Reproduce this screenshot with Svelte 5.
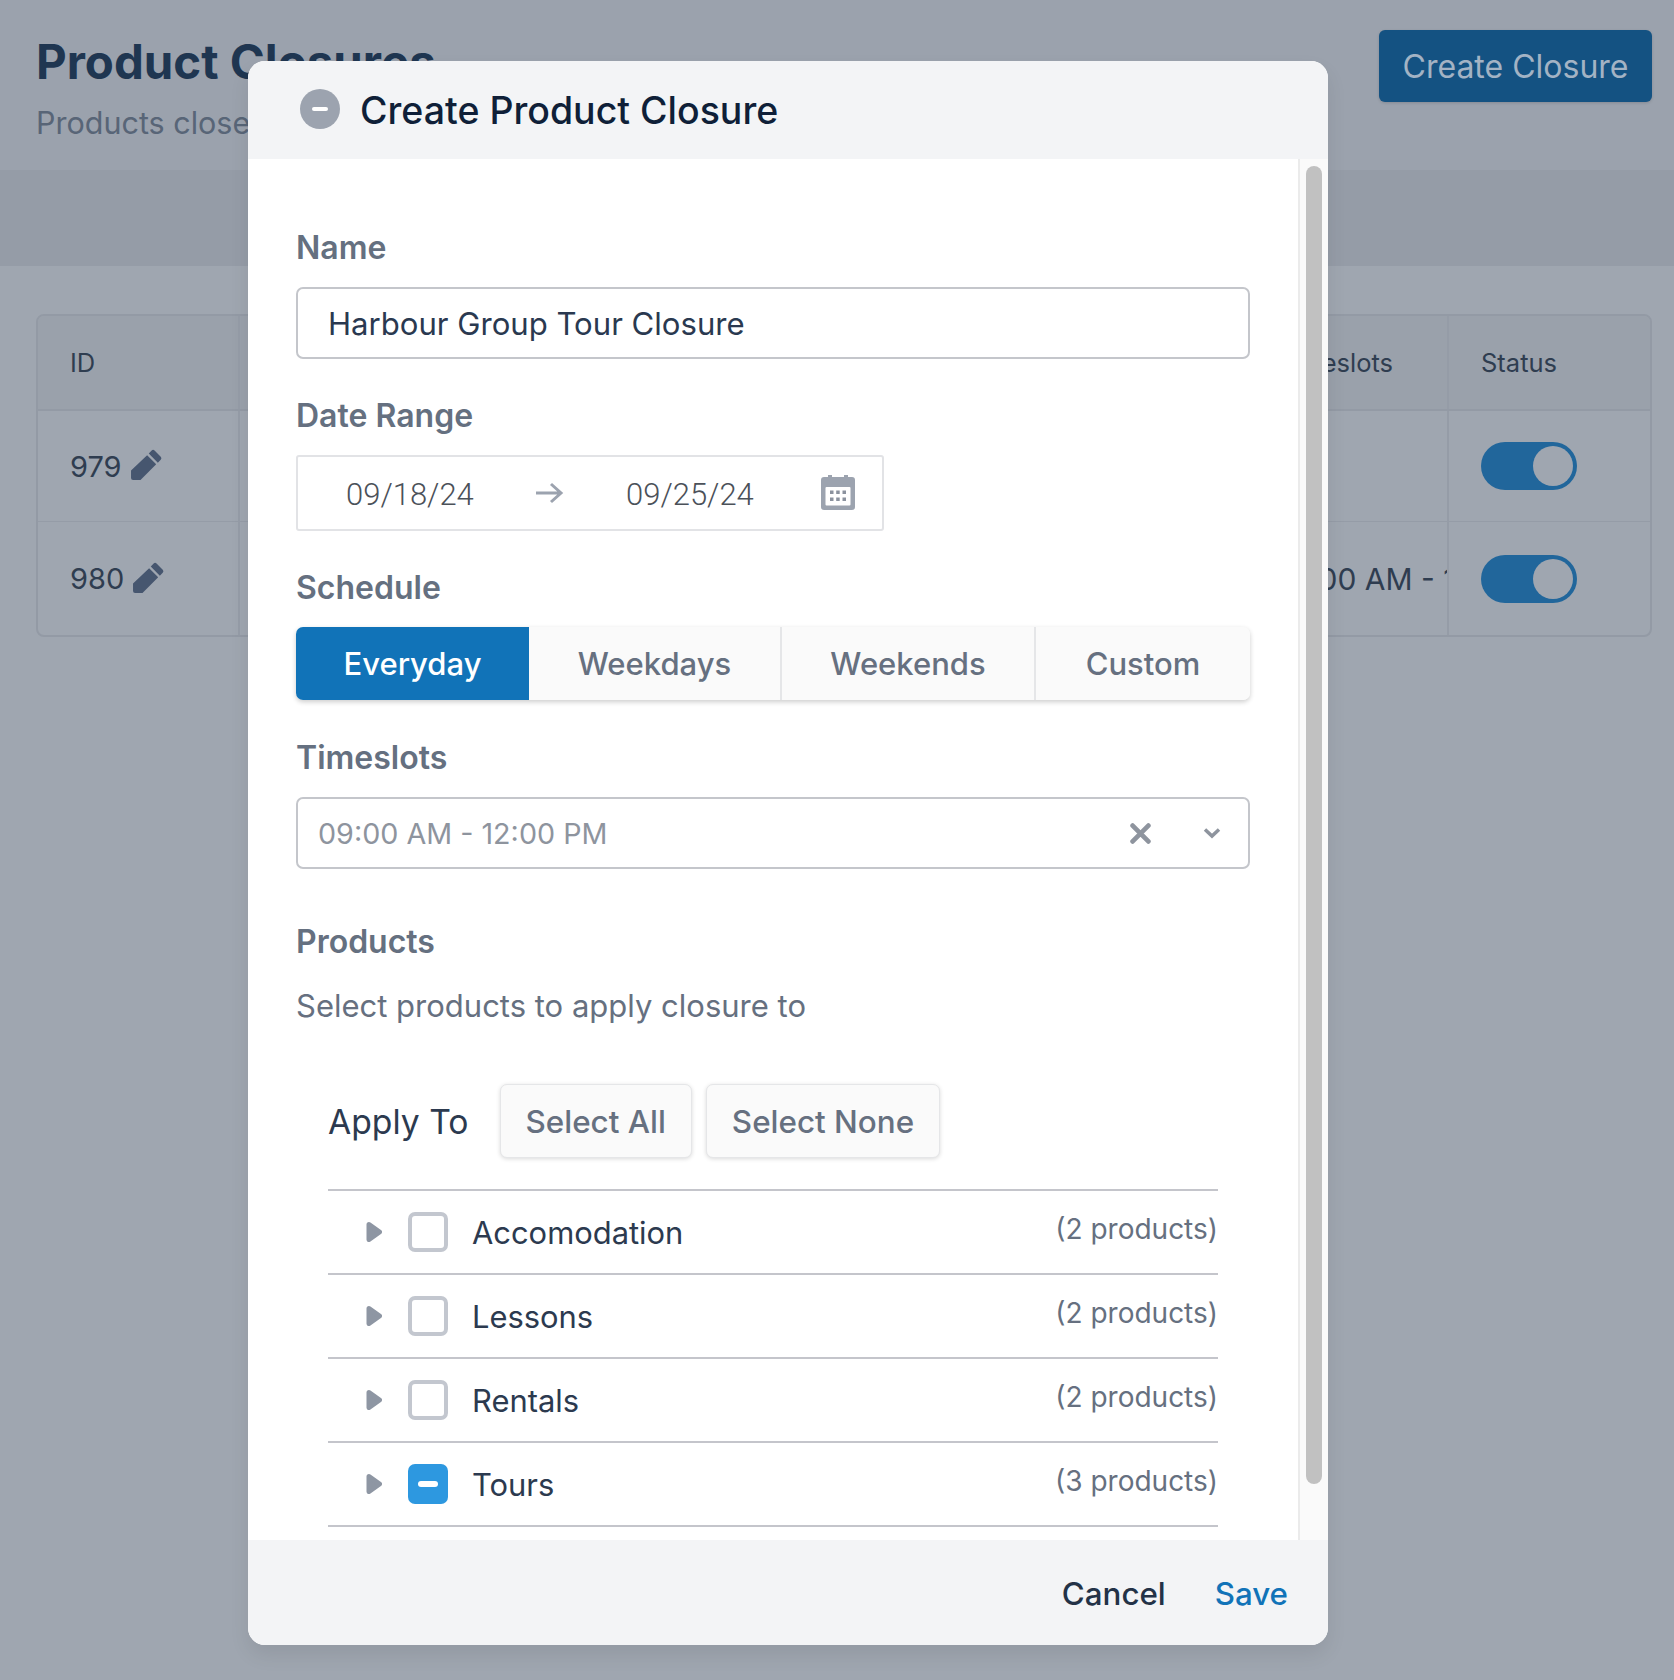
<script>
    const rows = [
        { id: 979, time: "" },
        { id: 980, time: "09:00 AM - 12:00 PM" },
    ];
    const days = ["Everyday", "Weekdays", "Weekends", "Custom"];
    const groups = [
        { name: "Accomodation", count: 2 },
        { name: "Lessons", count: 2 },
        { name: "Rentals", count: 2 },
        { name: "Tours", count: 3, some: true },
    ];
    let schedule = $state("Everyday");
</script>

<div class="page">
    <header class="top">
        <div>
            <h1>Product Closures</h1>
            <p>Products closed for the selected dates</p>
        </div>
        <button class="create">Create Closure</button>
    </header>
    <div class="band"></div>
    <div class="content">
        <div class="table">
            <div class="row head">
                <div class="cell id">ID</div>
                <div class="cell main"><span class="slots">Timeslots</span></div>
                <div class="cell status">Status</div>
            </div>
            {#each rows as r}
                <div class="row">
                    <div class="cell id">
                        {r.id}
                        <svg class="pencil" viewBox="0 0 32 32"><path d="M21 2.500a2 2 0 0 1 2.800 0l6 6a2 2 0 0 1 0 2.800L27 14.200 18.200 5.400zM16.600 7l8.800 8.800L10.200 31H3a2 2 0 0 1-2-2v-7.200z" /></svg>
                    </div>
                    <div class="cell main"><span class="slots">{r.time}</span></div>
                    <div class="cell status"><span class="toggle"><span class="knob"></span></span></div>
                </div>
            {/each}
        </div>
    </div>
</div>

<div class="modal">
    <div class="modalHead">
        <span class="minusIcon"><span></span></span>
        <h2>Create Product Closure</h2>
    </div>
    <div class="modalMid">
        <div class="form">
            <label class="label first" for="name">Name</label>
            <input id="name" class="field" value="Harbour Group Tour Closure" />

            <div class="label dateLabel">Date Range</div>
            <div class="dates">
                <span class="date">09/18/24</span>
                <svg class="arrow" viewBox="0 0 30 24"><path d="M2 12h25M17 3l10 9-10 9" /></svg>
                <span class="date">09/25/24</span>
                <svg class="cal" viewBox="0 0 34 36">
                    <path d="M3 3h4V1h4v2h12V1h4v2h4a3 3 0 0 1 3 3v27a3 3 0 0 1-3 3H3a3 3 0 0 1-3-3V6a3 3 0 0 1 3-3z" fill="#9ca3af" />
                    <rect x="4.500" y="13" width="25" height="18.500" rx="1" fill="#fff" />
                    <g fill="#8b929e">
                        <rect x="9" y="16.500" width="3.500" height="3.500" /><rect x="15.200" y="16.500" width="3.500" height="3.500" /><rect x="21.500" y="16.500" width="3.500" height="3.500" />
                        <rect x="9" y="23.500" width="3.500" height="3.500" /><rect x="15.200" y="23.500" width="3.500" height="3.500" /><rect x="21.500" y="23.500" width="3.500" height="3.500" />
                    </g>
                </svg>
            </div>

            <div class="label schedLabel">Schedule</div>
            <div class="segments">
                {#each days as d}
                    <button class="seg" class:active={schedule === d} onclick={() => (schedule = d)}>{d}</button>
                {/each}
            </div>

            <div class="label slotLabel">Timeslots</div>
            <div class="select">
                <span class="selected">09:00 AM - 12:00 PM</span>
                <svg class="clear" viewBox="0 0 20 20"><path d="M2.500 2.500l15 15M17.500 2.500l-15 15" /></svg>
                <svg class="chev" viewBox="0 0 18 12"><path d="M2 2.500l7 6.500 7-6.500" /></svg>
            </div>

            <div class="label prodLabel">Products</div>
            <p class="help">Select products to apply closure to</p>

            <div class="tree">
                <div class="applyBar">
                    <span class="applyTo">Apply To</span>
                    <button class="small">Select All</button>
                    <button class="small">Select None</button>
                </div>
                {#each groups as g}
                    <div class="group">
                        <svg class="tri" viewBox="0 0 16 20"><path d="M3 2.500l10.500 7.500-10.500 7.500z" /></svg>
                        <span class="check" class:some={g.some}>{#if g.some}<span></span>{/if}</span>
                        <span class="gname">{g.name}</span>
                        <span class="count">({g.count} products)</span>
                    </div>
                {/each}
            </div>
        </div>
        <div class="scroll"><div class="thumb"></div></div>
    </div>
    <div class="modalFoot">
        <button class="link cancel">Cancel</button>
        <button class="link save">Save</button>
    </div>
</div>

<style>
    :global(body) {
        background: #9fa6b0;
        font-family: Inter, "Noto Sans", sans-serif;
    }
    button {
        font-family: inherit;
        cursor: pointer;
    }

    .page {
        height: 1680px;
        overflow: hidden;
        background: #9fa6b0;
    }
    .top {
        display: flex;
        justify-content: space-between;
        height: 170px;
        padding: 30px 22px 0 36px;
        box-sizing: border-box;
        background: #9ba2ad;
    }
    .top h1 {
        margin: 0;
        padding-top: 5px;
        font-size: 47.400px;
        line-height: 54px;
        font-weight: 700;
        color: #1f3651;
    }
    .top p {
        margin: 14px 0 0;
        font-size: 30.500px;
        line-height: 40px;
        color: #586577;
    }
    .create {
        width: 273px;
        height: 72px;
        padding-top: 2px;
        border: 0;
        border-radius: 6px;
        background: #145282;
        color: #a3b3c4;
        font-size: 32px;
        box-shadow: 0 1px 3px rgba(0, 0, 0, 0.15);
    }
    .band {
        height: 96px;
        background: #959ca7;
    }
    .content {
        padding: 48px 22px 0 36px;
    }
    .table {
        border: 2px solid #939aa5;
        border-radius: 8px;
        overflow: hidden;
        font-size: 29px;
        color: #2f3d50;
    }
    .row {
        display: flex;
        height: 113px;
        border-top: 1px solid #959ca7;
    }
    .row.head {
        height: 93px;
        border-top: 0;
        border-bottom: 2px solid #939aa5;
        background: #9aa1ab;
        font-size: 25.500px;
    }
    .row.head + .row {
        height: 110px;
        border-top: 0;
    }
    .cell {
        display: flex;
        align-items: center;
        box-sizing: border-box;
    }
    .cell.id {
        width: 202px;
        padding-left: 32px;
        gap: 8px;
        border-right: 2px solid #959ca7;
    }
    .cell.main {
        flex: 1;
        overflow: hidden;
        justify-content: flex-end;
    }
    .slots {
        white-space: nowrap;
        font-size: 30px;
        margin-right: -128px;
    }
    .head .slots {
        margin-right: 54px;
        font-size: 25.500px;
    }
    .cell.status {
        width: 203px;
        padding-left: 32px;
        border-left: 2px solid #959ca7;
    }
    .pencil {
        width: 33px;
        height: 33px;
        margin-top: -3px;
        fill: #46566f;
    }
    .toggle {
        display: flex;
        justify-content: flex-end;
        align-items: center;
        width: 96px;
        height: 48px;
        padding-right: 4px;
        box-sizing: border-box;
        border-radius: 24px;
        background: #21669b;
    }
    .knob {
        width: 40px;
        height: 40px;
        border-radius: 50%;
        background: #9fa6b0;
    }

    .modal {
        position: absolute;
        left: 248px;
        top: 61px;
        width: 1080px;
        height: 1584px;
        display: flex;
        flex-direction: column;
        overflow: hidden;
        border-radius: 17px;
        background: #fff;
        box-shadow: 0 10px 20px rgba(0, 0, 0, 0.08);
    }
    .modalHead {
        display: flex;
        align-items: center;
        gap: 20px;
        height: 98px;
        padding-left: 52px;
        flex: none;
        background: #f3f4f6;
    }
    .modalHead h2 {
        margin: 0;
        font-size: 37.500px;
        font-weight: 500;
        color: #0f1f38;
    }
    .minusIcon {
        display: flex;
        align-items: center;
        justify-content: center;
        width: 40px;
        height: 40px;
        margin-top: -2px;
        border-radius: 50%;
        background: #9ca3af;
    }
    .minusIcon span {
        width: 16px;
        height: 4px;
        border-radius: 2px;
        background: #fff;
    }
    .modalMid {
        flex: 1;
        display: flex;
        min-height: 0;
    }
    .form {
        flex: 1;
        overflow: hidden;
        padding: 0 48px;
    }
    .scroll {
        width: 30px;
        flex: none;
        box-sizing: border-box;
        padding: 7px 6px 0 6px;
        border-left: 2px solid #ebebeb;
        background: #fafafa;
    }
    .thumb {
        height: 1318px;
        border-radius: 8px;
        background: #c1c1c1;
    }
    .label {
        display: block;
        font-size: 32px;
        line-height: 40px;
        font-weight: 600;
        color: #657080;
    }
    .first {
        margin-top: 69px;
    }
    .field {
        display: block;
        width: 100%;
        height: 72px;
        margin-top: 19px;
        padding: 2px 30px 0;
        box-sizing: border-box;
        border: 2px solid #c4c6cb;
        border-radius: 7px;
        font-family: inherit;
        font-size: 31.100px;
        color: #2a3950;
    }
    .dateLabel {
        margin-top: 37px;
    }
    .dates {
        display: flex;
        align-items: center;
        width: 588px;
        height: 76px;
        margin-top: 19px;
        padding-left: 48px;
        box-sizing: border-box;
        border: 2px solid #e2e3e6;
        border-radius: 3px;
    }
    .date {
        width: 128px;
        margin-top: 2px;
        font-family: Roboto, "Liberation Sans", sans-serif;
        font-weight: 300;
        font-size: 31px;
        color: #4b5159;
    }
    .arrow {
        width: 30px;
        height: 24px;
        margin: 0 62px 0 60px;
        fill: none;
        stroke: #9ca3af;
        stroke-width: 3;
    }
    .cal {
        width: 34px;
        height: 36px;
        margin-left: 67px;
        margin-top: -2px;
    }
    .schedLabel {
        margin-top: 37px;
    }
    .segments {
        display: flex;
        height: 73px;
        margin-top: 19px;
        border-radius: 7px;
        overflow: hidden;
        background: #fafafa;
        box-shadow: 0 2px 5px rgba(0, 0, 0, 0.2);
    }
    .seg {
        border: 0;
        border-right: 2px solid #e5e6e8;
        background: #fafafa;
        color: #667080;
        font-size: 31px;
        font-weight: 500;
        padding: 0;
        width: 253px;
    }
    .seg:first-child {
        width: 233px;
        border-right: 0;
    }
    .seg:nth-child(3) {
        width: 254px;
    }
    .seg:last-child {
        flex: 1;
        border-right: 0;
    }
    .seg.active {
        background: #1173b8;
        color: #fff;
    }
    .slotLabel {
        margin-top: 38px;
    }
    .select {
        display: flex;
        align-items: center;
        height: 72px;
        margin-top: 19px;
        box-sizing: border-box;
        padding-left: 20px;
        border: 2px solid #c4c6cb;
        border-radius: 7px;
    }
    .selected {
        flex: 1;
        font-size: 28.700px;
        color: #8e949e;
    }
    .clear {
        width: 21px;
        height: 21px;
        margin-right: 52px;
        fill: none;
        stroke: #8e949e;
        stroke-width: 4.500;
        stroke-linecap: round;
    }
    .chev {
        width: 18px;
        height: 12px;
        margin-right: 27px;
        fill: none;
        stroke: #8e949e;
        stroke-width: 3.500;
    }
    .prodLabel {
        margin-top: 53px;
    }
    .help {
        margin: 24px 0 0;
        font-size: 31px;
        line-height: 40px;
        color: #667080;
    }
    .tree {
        margin-top: 58px;
        padding: 0 32px 0 32px;
    }
    .applyBar {
        display: flex;
        height: 105px;
        align-items: flex-start;
    }
    .applyTo {
        font-size: 33.700px;
        line-height: 75px;
        margin-right: 31px;
        color: #2c3a4f;
    }
    .small {
        height: 74px;
        padding: 2px 25px 0;
        margin-right: 14px;
        border: 1px solid #e5e6e8;
        border-radius: 7px;
        background: #fafafa;
        color: #667080;
        font-size: 31.400px;
        font-weight: 500;
        box-shadow: 0 1px 4px rgba(0, 0, 0, 0.15);
    }
    .group {
        display: flex;
        align-items: center;
        height: 84px;
        box-sizing: border-box;
        border-top: 2px solid #c4c5cb;
    }
    .group:last-child {
        border-bottom: 2px solid #c4c5cb;
        height: 86px;
    }
    .tri {
        width: 16px;
        height: 20px;
        margin-left: 38px;
        fill: #8e96a3;
        stroke: #8e96a3;
        stroke-width: 5;
        stroke-linejoin: round;
    }
    .check {
        display: flex;
        align-items: center;
        justify-content: center;
        width: 40px;
        height: 40px;
        margin-left: 26px;
        box-sizing: border-box;
        border: 4px solid #c3c7cf;
        border-radius: 7px;
    }
    .check.some {
        border: 0;
        background: #2d98e0;
    }
    .check.some span {
        width: 20px;
        height: 6px;
        border-radius: 3px;
        background: #fff;
    }
    .gname {
        flex: 1;
        margin-left: 24px;
        font-size: 30.900px;
        color: #2c3a4f;
    }
    .count {
        margin-top: -7px;
        font-size: 28px;
        color: #667080;
    }
    .modalFoot {
        display: flex;
        justify-content: flex-end;
        align-items: center;
        gap: 49px;
        height: 105px;
        flex: none;
        padding: 2px 40px 0 0;
        box-sizing: border-box;
        background: #f3f4f6;
    }
    .link {
        padding: 0;
        border: 0;
        background: none;
        font-size: 31.300px;
        font-weight: 500;
    }
    .cancel {
        color: #233247;
    }
    .save {
        color: #1173b8;
    }
</style>
